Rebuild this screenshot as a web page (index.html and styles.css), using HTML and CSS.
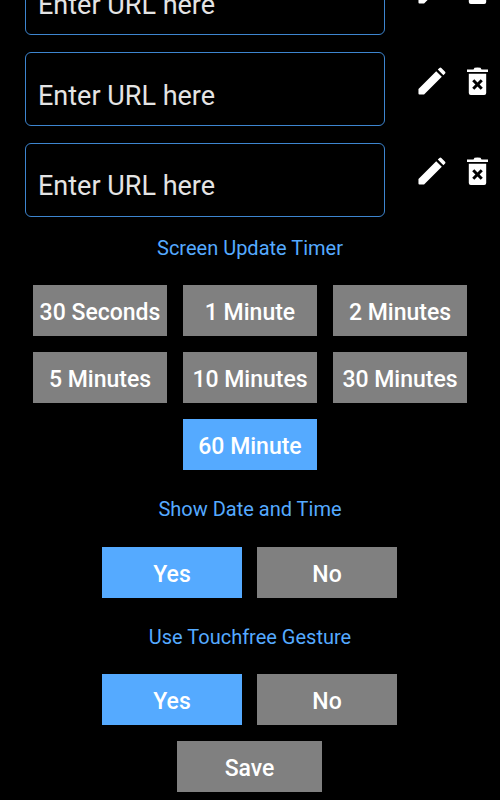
FILE: index.html
```html
<!DOCTYPE html>
<html>
<head>
  <title>Settings</title>
  <link rel="stylesheet" href="styles.css">
</head>
<body>
  <div class="page">
    <div class="url-row">
      <div class="url-box">Enter URL here</div>
      <div class="icons">
        <svg class="icon-edit" viewBox="0 0 30 30"><path d="M0.5 23.5 L19.5 4.5 L25.5 10.5 L6.5 29.5 L1.5 29.5 Q0.5 29.5 0.5 28.5 Z M21.2 2.8 L23 1 Q24 0 25 1 L29 5 Q30 6 29 7 L27.2 8.8 Z"/></svg>
        <svg class="icon-trash" viewBox="0 0 21 28"><path fill-rule="evenodd" d="M0 2.5 L6.5 2.5 L7.5 0.8 Q10.5 0 13.5 0.8 L14.5 2.5 L21 2.5 L21 5 L0 5 Z M1.8 6.8 L19.2 6.8 L19.2 26 Q19.2 28 17.2 28 L3.8 28 Q1.8 28 1.8 26 Z M7.3 12.2 L5.2 14.3 L8.4 17.5 L5.2 20.7 L7.3 22.8 L10.5 19.6 L13.7 22.8 L15.8 20.7 L12.6 17.5 L15.8 14.3 L13.7 12.2 L10.5 15.4 Z"/></svg>
      </div>
    </div>
    <div class="url-row">
      <div class="url-box">Enter URL here</div>
      <div class="icons">
        <svg class="icon-edit" viewBox="0 0 30 30"><path d="M0.5 23.5 L19.5 4.5 L25.5 10.5 L6.5 29.5 L1.5 29.5 Q0.5 29.5 0.5 28.5 Z M21.2 2.8 L23 1 Q24 0 25 1 L29 5 Q30 6 29 7 L27.2 8.8 Z"/></svg>
        <svg class="icon-trash" viewBox="0 0 21 28"><path fill-rule="evenodd" d="M0 2.5 L6.5 2.5 L7.5 0.8 Q10.5 0 13.5 0.8 L14.5 2.5 L21 2.5 L21 5 L0 5 Z M1.8 6.8 L19.2 6.8 L19.2 26 Q19.2 28 17.2 28 L3.8 28 Q1.8 28 1.8 26 Z M7.3 12.2 L5.2 14.3 L8.4 17.5 L5.2 20.7 L7.3 22.8 L10.5 19.6 L13.7 22.8 L15.8 20.7 L12.6 17.5 L15.8 14.3 L13.7 12.2 L10.5 15.4 Z"/></svg>
      </div>
    </div>
    <div class="url-row">
      <div class="url-box">Enter URL here</div>
      <div class="icons">
        <svg class="icon-edit" viewBox="0 0 30 30"><path d="M0.5 23.5 L19.5 4.5 L25.5 10.5 L6.5 29.5 L1.5 29.5 Q0.5 29.5 0.5 28.5 Z M21.2 2.8 L23 1 Q24 0 25 1 L29 5 Q30 6 29 7 L27.2 8.8 Z"/></svg>
        <svg class="icon-trash" viewBox="0 0 21 28"><path fill-rule="evenodd" d="M0 2.5 L6.5 2.5 L7.5 0.8 Q10.5 0 13.5 0.8 L14.5 2.5 L21 2.5 L21 5 L0 5 Z M1.8 6.8 L19.2 6.8 L19.2 26 Q19.2 28 17.2 28 L3.8 28 Q1.8 28 1.8 26 Z M7.3 12.2 L5.2 14.3 L8.4 17.5 L5.2 20.7 L7.3 22.8 L10.5 19.6 L13.7 22.8 L15.8 20.7 L12.6 17.5 L15.8 14.3 L13.7 12.2 L10.5 15.4 Z"/></svg>
      </div>
    </div>

    <div class="title title-timer">Screen Update Timer</div>
    <div class="timer-grid">
      <div class="btn">30 Seconds</div>
      <div class="btn">1 Minute</div>
      <div class="btn">2 Minutes</div>
      <div class="btn">5 Minutes</div>
      <div class="btn">10 Minutes</div>
      <div class="btn">30 Minutes</div>
      <div class="btn active">60 Minute</div>
    </div>

    <div class="title title-date">Show Date and Time</div>
    <div class="yes-no yes-no-date">
      <div class="btn choice active">Yes</div>
      <div class="btn choice">No</div>
    </div>

    <div class="title title-gesture">Use Touchfree Gesture</div>
    <div class="yes-no">
      <div class="btn choice active">Yes</div>
      <div class="btn choice">No</div>
    </div>

    <div class="save-row">
      <div class="btn save">Save</div>
    </div>
  </div>
</body>
</html>
```

FILE: styles.css
```css
html, body {
  margin: 0;
  height: 800px;
  overflow: hidden;
  background-color: #000000;
}

body {
  font-family: Roboto, sans-serif;
}

/* the screenshot is scrolled, first row is cut off at the top */
.page {
  margin-top: -38.7px;
}

.url-row {
  display: flex;
  height: 74px;
  margin-bottom: 16.7px;
  padding-left: 25px;
}

.url-box {
  box-sizing: border-box;
  width: 360px;
  height: 74px;
  padding: 25.7px 0 0 12px;
  border: 1px solid #3d85cf;
  border-radius: 6px;
  color: #e4e4e4;
  font-size: 27px;
  line-height: 34px;
}

.icons {
  display: flex;
  align-items: flex-start;
  padding-top: 14.7px;
  margin-left: 33px;
}

.icon-edit {
  width: 28px;
  height: 28px;
  fill: #ffffff;
}

.icon-trash {
  width: 21px;
  height: 28px;
  margin-left: 21px;
  fill: #ffffff;
}

.title {
  color: #55aaff;
  font-size: 20px;
  line-height: 24px;
  text-align: center;
}

.title-timer {
  margin-top: 19.3px;
}

.timer-grid {
  display: flex;
  flex-wrap: wrap;
  justify-content: center;
  gap: 16px;
  margin-top: 25px;
}

.btn {
  box-sizing: border-box;
  display: flex;
  align-items: center;
  justify-content: center;
  width: 134px;
  height: 51px;
  padding-top: 4px;
  background-color: #808080;
  color: #ffffff;
  font-size: 23px;
  font-weight: 500;
}

.btn.active {
  background-color: #55aaff;
}

.title-date {
  margin-top: 27px;
}

.title-gesture {
  margin-top: 27.3px;
}

.yes-no {
  display: flex;
  justify-content: center;
  gap: 15.5px;
  margin-top: 25px;
  padding-right: 1px;
}

.yes-no-date {
  margin-top: 25.7px;
}

.choice {
  width: 139.5px;
}

.save-row {
  display: flex;
  justify-content: center;
  margin-top: 16px;
  padding-right: 1px;
}

.save {
  width: 145px;
}
```
